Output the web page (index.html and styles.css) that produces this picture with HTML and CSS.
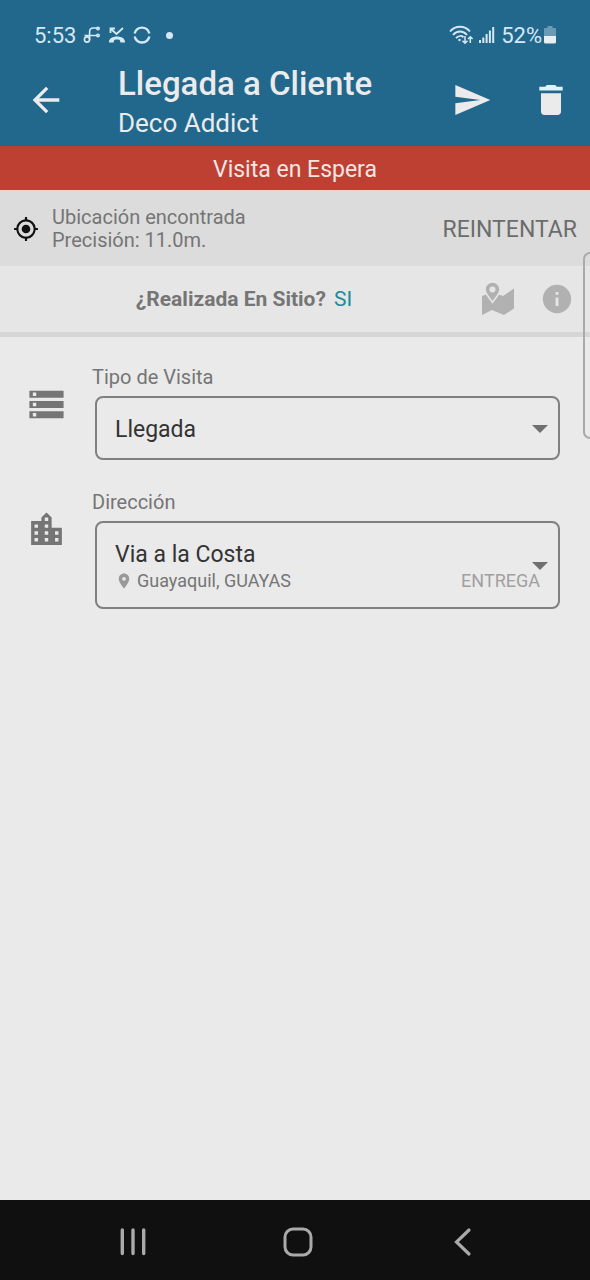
FILE: index.html
```html
<!DOCTYPE html>
<html lang="es">
<head>
<meta charset="utf-8">
<meta name="viewport" content="width=device-width, initial-scale=1">
<title>Llegada a Cliente</title>
<link rel="stylesheet" href="styles.css">
</head>
<body>
<div class="screen">
  <div class="status-bar">
    <div class="status-left">
      <span>5:53</span>
      <svg class="glyph" width="18" height="18" viewBox="0 0 18 18" fill="none" stroke="currentColor" stroke-width="1.6" aria-hidden="true"><circle cx="4" cy="13.500" r="2.600"/><path d="M6.600 14V6c0-2.500 1.200-4 3.500-4H14M1.500 9.500H14"/><circle cx="15" cy="2.600" r="1.200"/><circle cx="15" cy="9.500" r="1.200"/></svg>
      <svg class="glyph" width="18" height="18" viewBox="0 0 18 18" aria-hidden="true"><path d="M2.500 7V2.500H7M3 3l5.500 5L15 2" fill="none" stroke="currentColor" stroke-width="1.800"/><path d="M1 16.500c-1-8 17-8 16 0h-4.500l-.8-2.500c-1.600-.6-3.800-.6-5.400 0l-.8 2.500z" fill="currentColor"/></svg>
      <svg class="glyph" width="18" height="18" viewBox="0 0 18 18" fill="none" stroke="currentColor" stroke-width="2.400" aria-hidden="true"><path d="M1.600 7.500C3.800-.4 14.200-.4 16.400 7.500M1.600 10.500c2.200 7.900 12.600 7.900 14.800 0"/></svg>
      <span class="status-dot"></span>
    </div>
    <div class="status-right">
      <svg width="24" height="20" viewBox="0 0 24 20" fill="none" stroke="currentColor" stroke-width="1.900" aria-hidden="true"><path d="M1 6.500C6.500.2 15.500.2 21 6.500M4 10c4-4.600 10-4.600 14 0M7 13.200c2.400-2.600 5.500-2.700 7.500-1"/><circle cx="10.500" cy="15" r="1.200" fill="currentColor" stroke="none"/><path stroke-width="1.500" d="M16 11v7M13.500 15.800l2.500 2.500 2.500-2.500M21.300 18v-6M19 14l2.300-2.300L23.600 14"/></svg>
      <svg width="16" height="18" viewBox="0 0 16 18" fill="currentColor" aria-hidden="true"><path d="M0 14h2v3H0zM3.300 11.500h2V17h-2zM6.600 8h2v9h-2zM9.900 4.500h2V17h-2zM13.200 1h2v16h-2z"/></svg>
      <span class="battery-level">52%<svg width="12" height="18" viewBox="0 0 12 18" aria-hidden="true"><path d="M3.500 0h5v2H11a1 1 0 0 1 1 1v7H0V3a1 1 0 0 1 1-1h2.500z" fill="#6b9bb4"/><path d="M0 10h12v6a1.500 1.500 0 0 1-1.500 1.500h-9A1.500 1.500 0 0 1 0 16z" fill="#e8eef2"/></svg></span>
    </div>
  </div>

  <header class="app-bar">
    <button class="icon-button" type="button" aria-label="Volver"><svg width="40" height="40" viewBox="0 0 24 24" fill="currentColor"><path d="M20 11H7.830l5.590-5.590L12 4l-8 8 8 8 1.410-1.410L7.830 13H20v-2z"/></svg></button>
    <div class="app-titles">
      <h1 class="app-title">Llegada a Cliente</h1>
      <p class="app-subtitle">Deco Addict</p>
    </div>
    <div class="app-actions">
      <button class="icon-button" type="button" aria-label="Enviar"><svg width="40" height="40" viewBox="0 0 24 24" fill="currentColor"><path d="M2.010 21L23 12 2.010 3 2 10l15 2-15 2z"/></svg></button>
      <button class="icon-button" type="button" aria-label="Eliminar"><svg width="40" height="40" viewBox="0 0 24 24" fill="currentColor"><path d="M6 19c0 1.100.9 2 2 2h8c1.100 0 2-.9 2-2V8H6v11z"/><path d="M19 4h-3.500l-1-1h-5l-1 1H5v2.300h14V4z" fill="#dff3fd"/></svg></button>
    </div>
  </header>

  <div class="banner">Visita en Espera</div>

  <section class="location">
    <svg width="26" height="26" viewBox="0 0 24 24" fill="#111" aria-hidden="true"><path d="M12 8c-2.210 0-4 1.790-4 4s1.790 4 4 4 4-1.790 4-4-1.790-4-4-4zm8.940 3A8.994 8.994 0 0 0 13 3.060V1h-2v2.060A8.994 8.994 0 0 0 3.060 11H1v2h2.060A8.994 8.994 0 0 0 11 20.940V23h2v-2.060A8.994 8.994 0 0 0 20.940 13H23v-2h-2.060zM12 19c-3.870 0-7-3.130-7-7s3.130-7 7-7 7 3.130 7 7-3.130 7-7 7z"/></svg>
    <p class="location-text">Ubicación encontrada<br>Precisión: 11.0m.</p>
    <button class="retry" type="button">REINTENTAR</button>
  </section>

  <section class="onsite">
    <p class="onsite-text"><strong class="onsite-question">¿Realizada En Sitio?</strong><span class="onsite-answer">SI</span></p>
    <button class="icon-button muted" type="button" aria-label="Ver mapa"><svg width="34" height="34" viewBox="0 0 34 34"><path d="M1 14l10-4 11 4 11-7.500v20L23 33l-12-5L1 33z" fill="currentColor"/><path d="M11.500 0C7.300 0 4 3.200 4 7.300c0 5 5.200 9.200 7.500 13 2.300-3.800 7.500-8 7.500-13C19 3.200 15.700 0 11.500 0z" fill="currentColor" stroke="#e6e6e6" stroke-width="1.600"/><circle cx="11.500" cy="7.500" r="3" fill="#e6e6e6"/></svg></button>
    <button class="icon-button muted" type="button" aria-label="Información"><svg width="34" height="34" viewBox="0 0 24 24" fill="currentColor"><path d="M12 2C6.480 2 2 6.480 2 12s4.480 10 10 10 10-4.480 10-10S17.520 2 12 2zm1 15h-2v-6h2v6zm0-8h-2V7h2v2z"/></svg></button>
  </section>

  <main class="form">
    <div class="field">
      <svg class="field-icon" viewBox="0 0 24 24" fill="currentColor" aria-hidden="true"><path d="M2 20h20v-4H2v4zm2-3h2v2H4v-2zM2 4v4h20V4H2zm4 3H4V5h2v2zm-4 7h20v-4H2v4zm2-3h2v2H4v-2z"/></svg>
      <div class="field-body">
        <label class="field-label" for="tipo">Tipo de Visita</label>
        <div class="select-box">
          <select class="select" id="tipo"><option>Llegada</option></select>
          <span class="caret"></span>
        </div>
      </div>
    </div>
    <div class="field">
      <svg class="field-icon" viewBox="0 0 24 24" fill="currentColor" aria-hidden="true"><path d="M15 11V5l-3-3-3 3v2H3v14h18V11h-6zm-8 8H5v-2h2v2zm0-4H5v-2h2v2zm0-4H5V9h2v2zm6 8h-2v-2h2v2zm0-4h-2v-2h2v2zm0-4h-2V9h2v2zm0-4h-2V5h2v2zm6 12h-2v-2h2v2zm0-4h-2v-2h2v2z"/></svg>
      <div class="field-body">
        <label class="field-label" for="direccion">Dirección</label>
        <div class="select-box">
          <select class="select select-address" id="direccion"><option>Via a la Costa</option></select>
          <div class="address-meta">
            <svg width="18" height="18" viewBox="0 0 24 24" fill="#999" aria-hidden="true"><path d="M12 2C8.130 2 5 5.130 5 9c0 5.250 7 13 7 13s7-7.750 7-13c0-3.870-3.130-7-7-7zm0 9.500a2.500 2.500 0 0 1 0-5 2.500 2.500 0 0 1 0 5z"/></svg>
            <span>Guayaquil, GUAYAS</span>
            <span class="address-kind">ENTREGA</span>
          </div>
          <span class="caret"></span>
        </div>
      </div>
    </div>
  </main>

  <nav class="nav-bar">
    <button class="nav-button" type="button" aria-label="Recientes"><svg width="30" height="30" viewBox="0 0 30 30" fill="none" stroke="currentColor" stroke-width="3.400" stroke-linecap="round"><path d="M4.300 3v23.500M15 3v23.500M25.700 3v23.500"/></svg></button>
    <button class="nav-button" type="button" aria-label="Inicio"><svg width="30" height="30" viewBox="0 0 30 30" fill="none" stroke="currentColor" stroke-width="3"><rect x="2" y="2" width="26" height="26" rx="8"/></svg></button>
    <button class="nav-button" type="button" aria-label="Atrás"><svg width="30" height="30" viewBox="0 0 30 30" fill="none" stroke="currentColor" stroke-width="3.200" stroke-linecap="round"><path d="M21 3L8.500 15 21 27"/></svg></button>
  </nav>

  <div class="edge-handle"></div>
</div>
</body>
</html>
```
FILE: styles.css
```css
* { box-sizing: border-box; }

body {
  margin: 0;
  background: #eaeaea;
  font-family: Roboto, "Noto Sans", sans-serif;
  color: #757575;
}

h1, p { margin: 0; }

button, select {
  padding: 0;
  border: 0;
  background: none;
  color: inherit;
  font: inherit;
}

svg { display: block; flex: none; }

.screen {
  position: relative;
  display: flex;
  flex-direction: column;
  min-height: 100vh;
}

.status-bar {
  display: flex;
  justify-content: space-between;
  align-items: center;
  height: 64px;
  padding: 6px 34px 0;
  background: #22678c;
  color: #d5e9f5;
  font-size: 22px;
}

.status-left, .status-right { display: flex; align-items: center; }
.status-left { gap: 7px; }
.status-right { gap: 6px; }
.battery-level { display: flex; align-items: center; gap: 2px; }

.status-dot {
  width: 7px;
  height: 7px;
  margin-left: 8px;
  border-radius: 50%;
  background: currentColor;
}

.app-bar {
  display: flex;
  align-items: center;
  height: 82px;
  padding: 0 19px 10px 26px;
  background: #22678c;
  color: #ebebeb;
}

.app-titles { flex: 1; padding: 6px 0 0 52px; }

.app-title {
  font-size: 33px;
  font-weight: 500;
  line-height: 40px;
}

.app-subtitle { font-size: 26px; line-height: 38px; }

.app-actions { display: flex; gap: 39px; }

.banner {
  padding: 4px 0 0;
  border-bottom: 1px solid #f3cfcc;
  background: #bd4032;
  color: #f5e6e4;
  font-size: 23px;
  line-height: 40px;
  text-align: center;
}

.location {
  display: flex;
  align-items: center;
  padding: 15px 13px 14px;
  background: #dcdcdc;
}

.location-text {
  flex: 1;
  padding-left: 13px;
  font-size: 20px;
  line-height: 23px;
}

.retry { font-size: 23px; color: #6c6c6c; }

.onsite {
  display: flex;
  align-items: center;
  gap: 25px;
  padding: 16px 16px 16px 32px;
  border-bottom: 5px solid #d6d6d6;
  background: #e6e6e6;
}

.onsite-text {
  flex: 1;
  font-size: 21px;
  text-align: center;
}

.onsite-question { font-weight: 700; }
.onsite-answer { margin-left: 8px; color: #1a8d9b; }
.muted { color: #b1b1b1; }

.form {
  display: flex;
  flex: 1;
  flex-direction: column;
  gap: 30px;
  padding: 28px 30px 28px 26px;
}

.field { display: flex; align-items: flex-start; }
.field-icon { width: 41px; height: 41px; margin-top: 19px; }
.field-body { flex: 1; padding-left: 25px; }

.field-label {
  display: block;
  font-size: 20px;
  line-height: 25px;
}

.select-box {
  position: relative;
  margin: 6px 0 0 3px;
  border: 2px solid #808080;
  border-radius: 8px;
}

.select {
  display: block;
  width: 100%;
  height: 60px;
  padding: 2px 40px 0 18px;
  appearance: none;
  color: #333;
  font-size: 23px;
}

.select-address { height: 44px; padding-top: 18px; }

.address-meta {
  display: flex;
  align-items: center;
  gap: 4px;
  padding: 3px 18px 15px;
  font-size: 18px;
  line-height: 22px;
}

.address-kind { margin-left: auto; color: #a0a0a0; }

.caret {
  position: absolute;
  top: 50%;
  right: 10px;
  border: 8px solid transparent;
  border-top-color: #707070;
  border-bottom: 0;
  margin-top: -3px;
  pointer-events: none;
}

.nav-bar {
  display: flex;
  align-items: center;
  height: 80px;
  padding: 4px 44px 0 50px;
  background: #101010;
  color: #aaa;
}

.nav-button { display: flex; flex: 1; justify-content: center; }

.edge-handle {
  position: absolute;
  top: 252px;
  right: 0;
  width: 7px;
  height: 187px;
  border: 2px solid #aaa;
  border-right: 0;
  border-radius: 7px 0 0 7px;
}
```
